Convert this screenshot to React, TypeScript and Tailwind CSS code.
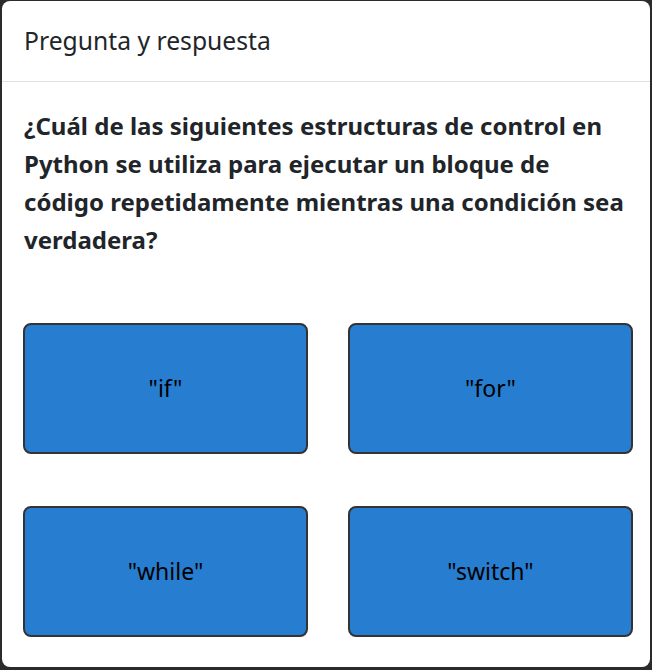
export default function App() {
  const opciones = ['"if"', '"for"', '"while"', '"switch"'];

  return (
    <div className="h-[670px] w-[652px] overflow-hidden bg-[#2b2a2c] pl-[2px] pt-[1px] pr-[2px] pb-[3px] font-['Noto_Sans',sans-serif]">
      <div className="flex h-full flex-col rounded-[8px] bg-white">
        <div className="flex h-[81px] items-center border-b border-[#dee2e6] px-[22px]">
          <h5 className="text-[24.7px] leading-[36px] text-[#212529]">Pregunta y respuesta</h5>
        </div>
        <div className="pl-[21px] pr-[17px] pt-[25px]">
          <p className="pl-[1px] text-[24px] font-bold leading-[38px] text-[#212529]">
            ¿Cuál de las siguientes estructuras de control en Python se utiliza para ejecutar un bloque de código repetidamente mientras una condición sea verdadera?
          </p>
          <div className="mt-[64px] grid grid-cols-2 gap-x-[40px] gap-y-[52px]">
            {opciones.map((o) => (
              <button
                key={o}
                className="flex h-[131px] items-center justify-center rounded-[8px] border-2 border-[#333333] bg-[#277dcf] text-[23px] text-black"
              >
                {o}
              </button>
            ))}
          </div>
        </div>
      </div>
    </div>
  );
}
